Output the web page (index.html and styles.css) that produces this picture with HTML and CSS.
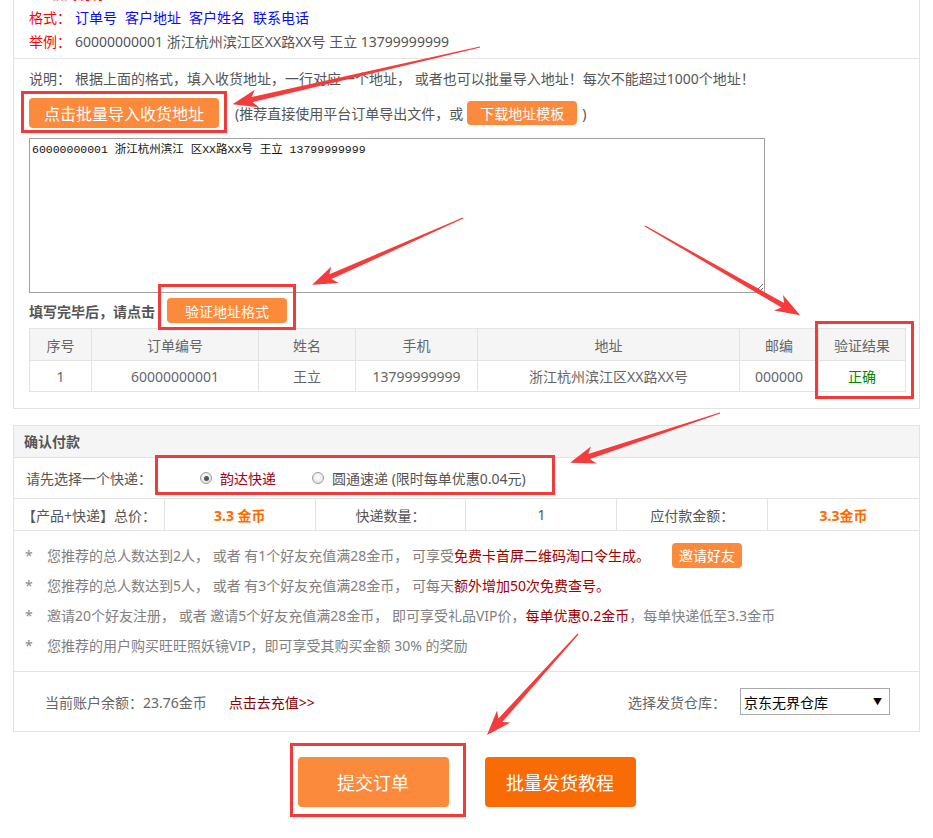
FILE: index.html
```html
<!DOCTYPE html>
<html lang="zh-CN">
<head>
<meta charset="utf-8">
<title>批量发货</title>
<link rel="stylesheet" href="styles.css">
</head>
<body>
<div class="page">
  <section class="panel panel-import">
    <div class="format">
      <div class="format-title">格式说明</div>
      <div class="format-row"><span class="lbl">格式：</span><span class="blue">订单号</span><span class="blue">客户地址</span><span class="blue">客户姓名</span><span class="blue">联系电话</span></div>
      <div class="format-row"><span class="lbl">举例：</span><span>60000000001 浙江杭州滨江区XX路XX号 王立 13799999999</span></div>
    </div>
    <div class="import">
      <p class="note"><span class="note-lbl">说明：</span>根据上面的格式，填入收货地址，一行对应一个地址， 或者也可以批量导入地址！每次不能超过1000个地址！</p>
      <div class="import-row">
        <button class="btn btn-lg">点击批量导入收货地址</button>
        <span class="hint">(推荐直接使用平台订单导出文件，或</span>
        <button class="btn btn-sm">下载地址模板</button>
        <span class="paren">)</span>
      </div>
      <textarea class="addr">60000000001 浙江杭州滨江 区XX路XX号 王立 13799999999</textarea>
      <div class="verify-row">
        <span class="verify-lbl">填写完毕后，请点击</span>
        <button class="btn btn-verify">验证地址格式</button>
      </div>
      <table class="result">
        <thead>
          <tr><th class="c1">序号</th><th class="c2">订单编号</th><th class="c3">姓名</th><th class="c4">手机</th><th class="c5">地址</th><th class="c6">邮编</th><th class="c7">验证结果</th></tr>
        </thead>
        <tbody>
          <tr><td>1</td><td>60000000001</td><td>王立</td><td>13799999999</td><td>浙江杭州滨江区XX路XX号</td><td>000000</td><td class="ok">正确</td></tr>
        </tbody>
      </table>
    </div>
  </section>

  <section class="panel panel-pay">
    <div class="pay-head">确认付款</div>
    <div class="pay-express">
      <span class="express-lbl">请先选择一个快递：</span>
      <div class="radios">
        <label class="radio-item"><span class="radio on"></span><span class="sel">韵达快递</span></label>
        <label class="radio-item"><span class="radio"></span><span>圆通速递 (限时每单优惠0.04元)</span></label>
      </div>
    </div>
    <div class="pay-sum">
      <div class="cell">【产品+快递】总价：</div>
      <div class="cell strong">3.3 金币</div>
      <div class="cell">快递数量：</div>
      <div class="cell">1</div>
      <div class="cell">应付款金额：</div>
      <div class="cell strong">3.3金币</div>
    </div>
    <ul class="notes">
      <li><span class="star">*</span><span>您推荐的总人数达到2人， 或者 有1个好友充值满28金币， 可享受<em>免费卡首屏二维码淘口令生成。</em></span><button class="btn btn-invite">邀请好友</button></li>
      <li><span class="star">*</span><span>您推荐的总人数达到5人， 或者 有3个好友充值满28金币， 可每天<em>额外增加50次免费查号。</em></span></li>
      <li><span class="star">*</span><span>邀请20个好友注册， 或者 邀请5个好友充值满28金币， 即可享受礼品VIP价，<em>每单优惠0.2金币</em>，每单快递低至3.3金币</span></li>
      <li><span class="star">*</span><span>您推荐的用户购买旺旺照妖镜VIP，即可享受其购买金额 30% 的奖励</span></li>
    </ul>
    <div class="pay-foot">
      <span class="balance">当前账户余额：23.76金币</span>
      <a class="recharge">点击去充值&gt;&gt;</a>
      <span class="spacer"></span>
      <span class="wh-lbl">选择发货仓库：</span>
      <div class="select"><span>京东无界仓库</span><span class="caret">▼</span></div>
    </div>
  </section>

  <div class="actions">
    <button class="btn btn-submit">提交订单</button>
    <button class="btn btn-guide">批量发货教程</button>
  </div>
</div>

<svg class="marks" width="933" height="838" viewBox="0 0 933 838" aria-hidden="true">
  <g fill="none" stroke="#f23a3a" stroke-width="3">
    <rect x="22.5" y="92.5" width="203" height="39"/>
    <rect x="159.5" y="285.5" width="135" height="43"/>
    <rect x="816.5" y="322.5" width="96" height="75"/>
    <rect x="156.5" y="456.5" width="397" height="37"/>
    <rect x="291.5" y="744.5" width="173" height="71"/>
  </g>
  <g fill="#f53b3b">
    <polygon transform="translate(480,47) rotate(167)" points="0,-0.6 234,-2.6 229,-9 254,0 229,9 234,2.6 0,0.6"/>
    <polygon transform="translate(463,218) rotate(156.1)" points="0,-0.6 145,-2.6 140,-9 165,0 140,9 145,2.6 0,0.6"/>
    <polygon transform="translate(645,226) rotate(29.9)" points="0,-0.6 159,-2.6 154,-9 179,0 154,9 159,2.6 0,0.6"/>
    <polygon transform="translate(720,413) rotate(161.6)" points="0,-0.6 138,-2.6 133,-9 158,0 133,9 138,2.6 0,0.6"/>
    <polygon transform="translate(578,634) rotate(132)" points="0,-0.6 116,-2.6 111,-9 136,0 111,9 116,2.6 0,0.6"/>
  </g>
</svg>
</body>
</html>
```

FILE: styles.css
```css
* { box-sizing: border-box; }

html, body {
  margin: 0;
  padding: 0;
  background: #fff;
}

body {
  position: relative;
  width: 933px;
  min-height: 838px;
  overflow: hidden;
  font-family: "Noto Sans", "Noto Sans CJK SC", sans-serif;
  font-size: 14px;
  color: #555;
}

.page {
  padding: 0 13px;
}

.panel {
  border: 1px solid #e3e3e3;
}

.panel-import {
  margin-top: -22px;
}

/* ---------- format block ---------- */
.format {
  padding: 3px 15px 4px;
}

.format-title {
  line-height: 24px;
  padding-left: 22px;
  color: #f00;
  font-size: 13px;
}

.format-row {
  display: flex;
  gap: 8px;
  line-height: 24px;
}

.lbl {
  color: #f00;
  margin-right: -4px;
}

.blue { color: #0a0aff; }

/* ---------- import block ---------- */
.import {
  border-top: 1px solid #e5e5e5;
  padding: 8px 15px 16px;
}

.note {
  margin: 0;
  line-height: 24px;
}

.note-lbl { margin-right: 4px; }

.btn {
  border: 0;
  border-radius: 4px;
  background: #fb8a3c;
  color: #fff;
  font-family: inherit;
  padding: 0;
  cursor: pointer;
}

.import-row {
  display: flex;
  align-items: center;
  margin-top: 7px;
  height: 30px;
}

.btn-lg {
  width: 190px;
  height: 30px;
  font-size: 16px;
}

.hint { margin-left: 16px; }

.btn-sm {
  width: 110px;
  height: 24px;
  font-size: 14px;
  margin-left: 4px;
}

.paren { margin-left: 5px; }

.addr {
  display: block;
  margin-top: 10px;
  width: 736px;
  height: 155px;
  border: 1px solid #a0a0a0;
  padding: 3px 2px;
  font-family: "Liberation Mono", "Noto Sans CJK SC", monospace;
  font-size: 11.5px;
  line-height: 15px;
  color: #111;
  resize: both;
}

.verify-row {
  display: flex;
  align-items: center;
  margin-top: 5px;
  height: 25px;
}

.verify-lbl { font-weight: bold; }

.btn-verify {
  width: 120px;
  height: 25px;
  font-size: 14px;
  margin-left: 12px;
}

.result {
  margin-top: 5px;
  width: 876px;
  border-collapse: collapse;
  table-layout: fixed;
  color: #666;
}

.result th,
.result td {
  border: 1px solid #e3e3e3;
  text-align: center;
  font-weight: normal;
  padding: 0;
}

.result th {
  background: #f5f5f5;
  height: 32px;
}

.result td { height: 31px; }

.c1 { width: 62px; }
.c2 { width: 167px; }
.c3 { width: 97px; }
.c4 { width: 122px; }
.c5 { width: 262px; }
.c6 { width: 79px; }
.c7 { width: 87px; }

.result .ok { color: #080; }

/* ---------- pay panel ---------- */
.panel-pay {
  margin-top: 16px;
}

.pay-head {
  height: 32px;
  line-height: 31px;
  padding-left: 10px;
  background: #f5f5f5;
  border-bottom: 1px solid #e3e3e3;
  font-weight: bold;
  color: #555;
}

.pay-express {
  display: flex;
  align-items: center;
  height: 41px;
  padding-left: 12px;
  border-bottom: 1px solid #e3e3e3;
}

.radios {
  display: flex;
  align-items: center;
  gap: 36px;
  margin-left: 48px;
}

.radio-item {
  display: flex;
  align-items: center;
  gap: 8px;
}

.radio {
  position: relative;
  width: 12px;
  height: 12px;
  border: 1px solid #9a9a9a;
  border-radius: 50%;
  background: radial-gradient(circle at 50% 40%, #fff 0%, #e6e6e6 70%, #d4d4d4 100%);
}

.radio.on::after {
  content: "";
  position: absolute;
  left: 2.5px;
  top: 2.5px;
  width: 5px;
  height: 5px;
  border-radius: 50%;
  background: #555;
}

.sel { color: #a0001c; }

.pay-sum {
  display: grid;
  grid-template-columns: repeat(6, 1fr);
  height: 32px;
  border-bottom: 1px solid #e3e3e3;
}

.pay-sum .cell {
  display: flex;
  align-items: center;
  justify-content: center;
  border-right: 1px solid #e3e3e3;
}

.pay-sum .cell:last-child { border-right: 0; }

.pay-sum .strong {
  color: #ff6a00;
  font-weight: bold;
}

.notes {
  list-style: none;
  margin: 0;
  padding: 9px 0 11px 11px;
  color: #808080;
}

.notes li {
  display: flex;
  align-items: center;
  height: 30px;
}

.star {
  width: 22px;
  color: #888;
}

.notes em {
  font-style: normal;
  color: #a00000;
}

.btn-invite {
  width: 70px;
  height: 25px;
  font-size: 14px;
  margin-left: 22px;
}

.pay-foot {
  display: flex;
  align-items: center;
  height: 60px;
  padding: 0 29px 0 31px;
  border-top: 1px solid #e3e3e3;
  color: #666;
}

.recharge {
  margin-left: 22px;
  color: #8b0000;
}

.spacer { flex: 1; }

.select {
  position: relative;
  display: flex;
  align-items: center;
  width: 150px;
  height: 27px;
  margin-left: 14px;
  padding-left: 3px;
  border: 1px solid #a9a9a9;
  color: #000;
}

.caret {
  position: absolute;
  right: 7px;
  top: 6px;
  font-size: 9px;
  color: #000;
}

/* ---------- bottom actions ---------- */
.actions {
  display: flex;
  justify-content: center;
  gap: 36px;
  margin-top: 25px;
}

.btn-submit,
.btn-guide {
  width: 151px;
  height: 50px;
  font-size: 18px;
}

.btn-guide { background: #f96c05; }

/* ---------- annotation overlay ---------- */
.marks {
  position: absolute;
  left: 0;
  top: 0;
  pointer-events: none;
}
```
